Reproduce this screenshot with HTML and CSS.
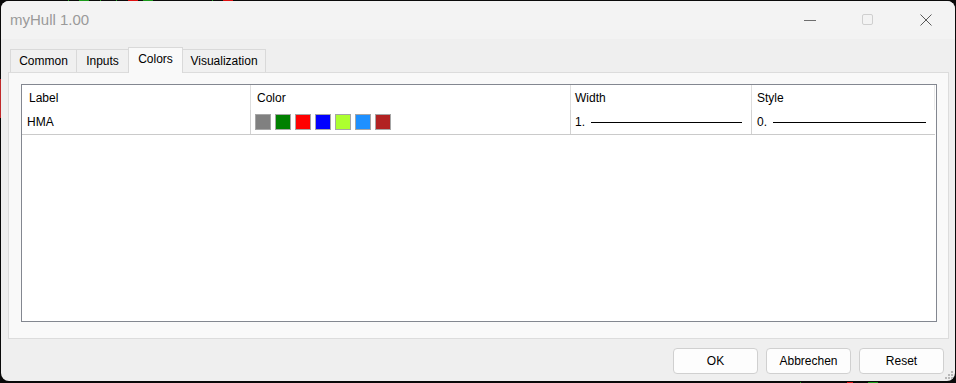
FILE: index.html
```html
<!DOCTYPE html>
<html>
<head>
<meta charset="utf-8">
<title>myHull 1.00</title>
<link rel="stylesheet" href="styles.css">
</head>
<body>
<div class="window">
  <div class="titlebar">
    <div class="title">myHull 1.00</div>
    <div class="controls">
      <div class="ctl"><svg width="14" height="14" viewBox="0 0 14 14"><path d="M1 7.5h12" stroke="#6e6e6e" stroke-width="1"/></svg></div>
      <div class="ctl"><svg width="14" height="14" viewBox="0 0 14 14"><rect x="1.5" y="1.5" width="10" height="10" rx="1.5" fill="none" stroke="#cfcfcf" stroke-width="1"/></svg></div>
      <div class="ctl"><svg width="14" height="14" viewBox="0 0 14 14"><path d="M1.5 1.5l11 11M12.5 1.5l-11 11" stroke="#5a5a5a" stroke-width="1"/></svg></div>
    </div>
  </div>
  <div class="content">
    <div class="tabs">
      <div class="tab t-common">Common</div>
      <div class="tab t-inputs">Inputs</div>
      <div class="tab t-colors active">Colors</div>
      <div class="tab t-vis">Visualization</div>
    </div>
    <div class="panel">
      <div class="listbox">
        <div class="row head">
          <div class="cell c1">Label</div>
          <div class="cell c2">Color</div>
          <div class="cell c3">Width</div>
          <div class="cell c4">Style</div>
        </div>
        <div class="row data">
          <div class="cell c1 lbl">HMA</div>
          <div class="cell c2 swatches">
            <span class="sw" style="background:#808080"></span>
            <span class="sw" style="background:#008000"></span>
            <span class="sw" style="background:#ff0000"></span>
            <span class="sw" style="background:#0000ff"></span>
            <span class="sw" style="background:#adff2f"></span>
            <span class="sw" style="background:#1e90ff"></span>
            <span class="sw" style="background:#b22222"></span>
          </div>
          <div class="cell c3 val"><span class="num">1.</span><span class="line"></span></div>
          <div class="cell c4 val"><span class="num">0.</span><span class="line"></span></div>
        </div>
      </div>
    </div>
    <div class="buttons">
      <button class="btn">OK</button>
      <button class="btn">Abbrechen</button>
      <button class="btn">Reset</button>
    </div>
  </div>
  <div class="grip">
    <svg width="9" height="9" viewBox="0 0 9 9" fill="#b8b8b8">
      <rect x="6" y="0" width="2" height="2"/>
      <rect x="3" y="3" width="2" height="2"/><rect x="6" y="3" width="2" height="2"/>
      <rect x="0" y="6" width="2" height="2"/><rect x="3" y="6" width="2" height="2"/><rect x="6" y="6" width="2" height="2"/>
    </svg>
  </div>
</div>
</body>
</html>
```
FILE: styles.css
```css
* { box-sizing: border-box; }
html, body { margin: 0; padding: 0; }
body {
  width: 956px;
  height: 383px;
  overflow: hidden;
  background-color: #0a0a0a;
  background-image:
    linear-gradient(to right,
      transparent 68px, #1a9a1a 68px, #1a9a1a 69px, transparent 69px,
      transparent 79px, #1a9a1a 79px, #1a9a1a 89px, transparent 89px,
      transparent 100px, #1a9a1a 100px, #1a9a1a 101px, transparent 101px,
      transparent 116px, #1a9a1a 116px, #1a9a1a 117px, transparent 117px,
      transparent 128px, #e01010 128px, #e01010 138px, transparent 138px,
      transparent 143px, #1a9a1a 143px, #1a9a1a 153px, transparent 153px,
      transparent 212px, #1a9a1a 212px, #1a9a1a 213px, transparent 213px,
      transparent 223px, #e01010 223px, #e01010 233px, transparent 233px),
    linear-gradient(to right,
      transparent 800px, #1a9a1a 800px, #1a9a1a 801px, transparent 801px,
      transparent 847px, #e01010 847px, #e01010 853px, transparent 853px,
      transparent 868px, #1a9a1a 868px, #1a9a1a 878px, transparent 878px),
    linear-gradient(to bottom, transparent 79px, #c0282a 79px, #c0282a 118px, transparent 118px);
  background-size: 956px 1px, 956px 1px, 1px 383px;
  background-position: 0 0, 0 382px, 0 0;
  background-repeat: no-repeat;
  font-family: "Liberation Sans", Arial, sans-serif;
  font-size: 12px;
  color: #000;
}
.window {
  position: relative;
  margin: 1px 0 0 1px;
  width: 954px;
  height: 380px;
  border-radius: 8px;
  overflow: hidden;
  background: #efefef;
  display: flex;
  flex-direction: column;
}
.titlebar {
  height: 38px;
  background: #f3f3f3;
  display: flex;
  align-items: stretch;
  flex: none;
}
.title {
  flex: 1;
  padding-left: 9px;
  font-size: 15px;
  color: #9a9a9a;
  line-height: 38px;
}
.controls { display: flex; }
.ctl {
  width: 58px;
  display: flex;
  align-items: center;
  justify-content: center;
}
.content {
  flex: 1;
  display: flex;
  flex-direction: column;
}
.tabs {
  display: flex;
  align-items: flex-end;
  height: 33px;
  padding-left: 9px;
  position: relative;
  z-index: 1;
}
.tab {
  height: 23px;
  border: 1px solid #d9d9d9;
  border-bottom: none;
  margin-right: -1px;
  background: #f0f0f0;
  line-height: 23px;
  color: #000;
  white-space: nowrap;
  text-align: center;
}
.t-common { width: 67px; }
.t-inputs { width: 53px; }
.t-colors { width: 55px; }
.t-vis { width: 84px; }
.tab.active {
  height: 26px;
  margin-bottom: -1px;
  background: #f9f9f9;
  line-height: 23px;
  position: relative;
  z-index: 2;
}
.panel {
  margin-left: 7px;
  width: 941px;
  height: 267px;
  background: #f9f9f9;
  border: 1px solid #dcdcdc;
  padding: 11px 11px 0 12px;
}
.listbox {
  width: 916px;
  height: 238px;
  background: #fff;
  border: 1px solid #838790;
}
.row { display: flex; }
.row.head { height: 25px; }
.row.data { height: 25px; border-bottom: 1px solid #cacaca; width: 913px; }
.cell {
  border-right: 1px solid #dedede;
  display: flex;
  align-items: center;
  white-space: nowrap;
}
.row.data .cell { border-right-color: #d2d2d2; }
.c1 { width: 229px; padding-left: 7px; }
.c2 { width: 320px; padding-left: 6px; }
.c3 { width: 181px; padding-left: 4px; }
.c4 { width: 183px; padding-left: 5px; }
.row.head .c4 { border-right-color: #eaeaea; }
.row.data .c4 { border-right: none; }
.row.head .cell { padding-top: 1px; }
.lbl { padding-left: 5px; }
.swatches { padding-left: 4px; gap: 4px; }
.sw {
  display: block;
  width: 16px;
  height: 16px;
  border: 1px solid #a6a6a6;
}
.val { padding-right: 9px; }
.num { width: 16px; flex: none; }
.line {
  flex: 1;
  height: 1px;
  background: #000;
  margin-top: 1px;
}
.buttons {
  display: flex;
  justify-content: flex-end;
  gap: 8px;
  padding: 9px 11px 0 0;
}
.btn {
  width: 85px;
  height: 26px;
  border: 1px solid #d0d0d0;
  border-radius: 4px;
  background: #fdfdfd;
  font-family: "Liberation Sans", Arial, sans-serif;
  font-size: 12px;
  color: #000;
  padding: 0;
}
.grip {
  position: absolute;
  right: 1px;
  bottom: 1px;
  width: 9px;
  height: 9px;
  line-height: 0;
}
```
